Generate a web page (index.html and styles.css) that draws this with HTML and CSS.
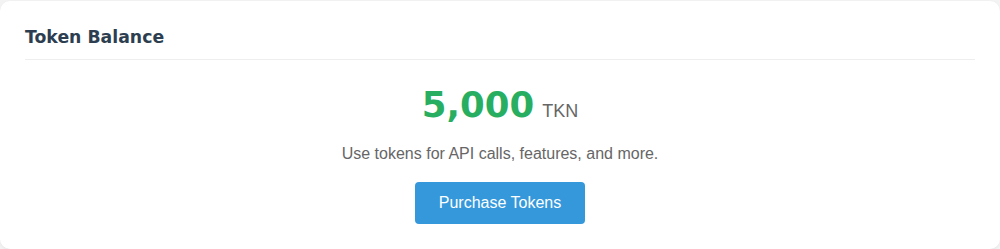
FILE: index.html
```html
<!DOCTYPE html>
<html>
<head>
<meta charset="utf-8">
<link rel="stylesheet" href="styles.css">
</head>
<body>
<div class="card">
  <h2 class="card-title">Token Balance</h2>
  <div class="balance">
    <div class="amount"><span class="value">5,000</span><span class="unit">TKN</span></div>
    <p class="hint">Use tokens for API calls, features, and more.</p>
    <button class="buy">Purchase Tokens</button>
  </div>
</div>
</body>
</html>
```
FILE: styles.css
```css
html, body { margin: 0; padding: 0; }
body {
  background: #f3f3f3;
  width: 1000px;
  height: 249px;
  overflow: hidden;
  padding-top: 1px;
  box-sizing: border-box;
}
.card {
  background: #fff;
  border-radius: 10px;
  box-shadow: 0 1px 3px rgba(0,0,0,0.06);
  padding: 0 25px 24px;
  height: 248px;
  box-sizing: border-box;
}
.card-title {
  margin: 0;
  padding: 26px 0 11px;
  font-family: "DejaVu Sans", Verdana, sans-serif;
  font-weight: bold;
  font-size: 17.3px;
  line-height: 21px;
  color: #2c3e50;
  border-bottom: 1px solid #eee;
}
.balance {
  display: flex;
  flex-direction: column;
  align-items: center;
  padding-top: 21px;
}
.amount {
  display: flex;
  align-items: baseline;
  gap: 8px;
}
.value {
  font-family: "DejaVu Sans", Verdana, sans-serif;
  font-weight: bold;
  font-size: 35.5px;
  line-height: 48px;
  color: #27ae60;
}
.unit {
  font-family: "Liberation Sans", Arial, sans-serif;
  font-size: 18px;
  color: #666;
}
.hint {
  margin: 15px 0 0;
  font-family: "Liberation Sans", Arial, sans-serif;
  font-size: 16px;
  line-height: 20px;
  color: #666;
}
.buy {
  margin-top: 18px;
  background: #3498db;
  color: #fff;
  border: none;
  border-radius: 4px;
  padding: 12px 24px;
  font-family: "Liberation Sans", Arial, sans-serif;
  font-size: 16px;
  line-height: 18px;
}
```
